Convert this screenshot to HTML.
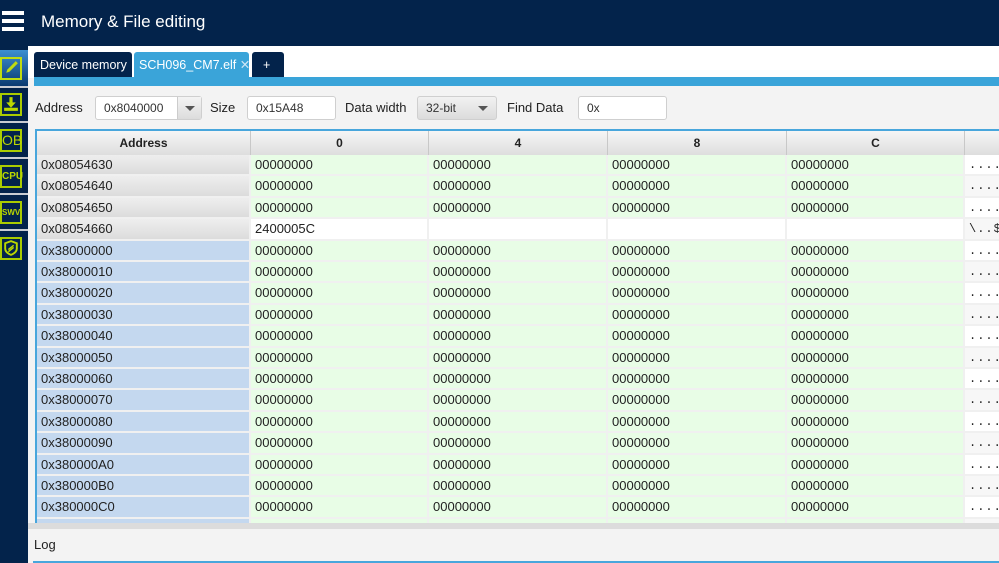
<!DOCTYPE html>
<html><head><meta charset="utf-8"><style>
*{margin:0;padding:0;box-sizing:border-box}
html{overflow:hidden;width:999px;height:563px}
body{width:999px;height:563px;overflow:hidden;background:#f3f3f3;font-family:"Liberation Sans",sans-serif;position:relative;color:#222}
.top{position:absolute;left:0;top:0;width:999px;height:46px;background:#03234b}
.title{position:absolute;left:41px;top:12px;color:#fff;font-size:17px}
.ham{position:absolute;left:2px;top:11px;width:22px;height:4px;background:#fff;box-shadow:0 8px 0 #fff,0 16px 0 #fff}
.side{position:absolute;left:0;top:46px;width:28px;height:517px;background:#03234b}
.sel{position:absolute;left:0;top:50px;width:28px;height:36px;background:linear-gradient(#3d8fd0,#0b3a70)}
.sep{position:absolute;left:0;width:28px;height:2px;background:#c9ccd2}
.ic{position:absolute;left:0;width:22px;height:23px;border:2px solid #aacc00;color:#bcd800;font-weight:bold;font-size:10px;text-align:center;line-height:19px}
.white{position:absolute;left:28px;top:46px;width:971px;height:32px;background:#fff}
.tab{position:absolute;top:52px;height:26px;color:#fff;font-size:12.5px;line-height:26px;padding-left:6px;border-radius:3px 3px 0 0;white-space:nowrap;overflow:hidden}
.strip{position:absolute;left:34px;top:77px;width:965px;height:9px;background:#3aa4d9}
.lbl{position:absolute;top:100px;font-size:13px;color:#222}
.inp{position:absolute;top:96px;height:24px;background:#fff;border:1px solid #cfcfcf;border-radius:3px;font-size:12px;line-height:22px;padding-left:8px;color:#333}
.tbl{position:absolute;left:35px;top:129px;width:964px;height:394px;border:2px solid #48a6dc;border-right:none;border-bottom:none;overflow:hidden;background:#f0f0f0}
.hd{position:absolute;top:0;height:24px;background:linear-gradient(#f6f6f6,#dedede);border-right:1px solid #c8c8c8;font-weight:bold;font-size:12px;text-align:center;line-height:24px}
.r{position:absolute;left:0;height:21.4px;width:964px}
.c{position:absolute;top:0;height:19.4px;font-size:13px;line-height:20px;padding-left:4px;white-space:nowrap}
.log{position:absolute;left:28px;top:523px;width:971px;height:40px;background:#f3f3f3;border-top:6px solid #dcdcdc;overflow:hidden}
</style></head><body>
<div class="top"><div class="ham"></div><div class="title">Memory &amp; File editing</div></div>
<div class="side"></div>
<div class="sel"></div>
<div class="sep" style="top:86px"></div><div class="sep" style="top:121px"></div><div class="sep" style="top:157px"></div><div class="sep" style="top:193px"></div><div class="sep" style="top:229px"></div>
<div class="ic" style="top:57px;border-color:#c0dc10"><svg width="18" height="18" viewBox="0 0 17 17"><path d="M4 13 L5 10 L13 2 L15 4 L7 12 Z" fill="#c0dc10"/></svg></div>
<div class="ic" style="top:93px"><svg width="18" height="18" viewBox="0 0 17 17"><path d="M7 2h3v5h3l-4.5 5L4 7h3z M2 12h13v3H2z" fill="#bcd800"/></svg></div>
<div class="ic" style="top:129px;font-size:14px;font-weight:normal">OB</div>
<div class="ic" style="top:165px">CPU</div>
<div class="ic" style="top:201px;font-size:8px">SWV</div>
<div class="ic" style="top:237px"><svg width="18" height="18" viewBox="0 0 17 17"><path d="M8.5 2 L14 4 V9 C14 12 11 14 8.5 15 C6 14 3 12 3 9 V4 Z" fill="none" stroke="#bcd800" stroke-width="1.8"/><path d="M6 10 L11 6 M6 12 L11 8" stroke="#bcd800" stroke-width="1.4"/></svg></div>
<div class="white"></div>
<div class="tab" style="left:34px;width:98px;background:#03234b">Device memory</div>
<div class="tab" style="left:134px;width:115px;background:#3aa4d9;padding-left:5px">SCH096_CM7.elf <span style="color:#cfe6f5">✕</span></div>
<div class="tab" style="left:252px;width:32px;background:#03234b;padding-left:11px">+</div>
<div class="strip"></div>
<div class="lbl" style="left:35px">Address</div>
<div class="inp" style="left:95px;width:107px">0x8040000<div style="position:absolute;right:0;top:0;width:24px;height:22px;background:linear-gradient(#f4f4f4,#dcdcdc);border-left:1px solid #ccc"><div style="position:absolute;left:7px;top:9px;border:5px solid transparent;border-top:5px solid #555;border-bottom:none"></div></div></div>
<div class="lbl" style="left:210px">Size</div>
<div class="inp" style="left:247px;width:89px">0x15A48</div>
<div class="lbl" style="left:345px">Data width</div>
<div class="inp" style="left:417px;width:80px;background:linear-gradient(#f2f2f2,#dcdcdc)">32-bit<div style="position:absolute;left:60px;top:9px;border:5px solid transparent;border-top:5px solid #555;border-bottom:none"></div></div>
<div class="lbl" style="left:507px">Find Data</div>
<div class="inp" style="left:578px;width:89px">0x</div>
<div class="tbl">
<div class="hd" style="left:0;width:214px">Address</div>
<div class="hd" style="left:214px;width:178px">0</div>
<div class="hd" style="left:392px;width:179px">4</div>
<div class="hd" style="left:571px;width:179px">8</div>
<div class="hd" style="left:750px;width:178px">C</div>
<div class="hd" style="left:928px;width:40px"></div>
<div id="rows"></div>
</div>
<div class="log"><div style="position:absolute;left:6px;top:8px;font-size:13px">Log</div><div style="position:absolute;left:5px;top:32px;width:970px;height:10px;border:2px solid #48a6dc;background:#fff"></div></div>
<script>
var a=["0x08054630","0x08054640","0x08054650","0x08054660","0x38000000","0x38000010","0x38000020","0x38000030","0x38000040","0x38000050","0x38000060","0x38000070","0x38000080","0x38000090","0x380000A0","0x380000B0","0x380000C0","0x380000D0"];
var h="";
for(var i=0;i<a.length;i++){
 var t=24+i*21.4;
 var ab=i<4?"linear-gradient(#eeeeee,#dcdcdc)":"#c4d8ef";
 var sp=i==3;
 var g=sp?"#fff":"#e8fde6";
 var d=sp?["2400005C","","",""]:["00000000","00000000","00000000","00000000"];
 var asc=sp?"\\..$":"....";
 var ab2=i%2?"#f7f7f7":"#fff";
 h+='<div class="r" style="top:'+t+'px"><div class="c" style="left:0;width:212px;background:'+ab+'">'+a[i]+'</div>';
 var L=[214,392,571,750],W=[176,177,177,176];
 for(var j=0;j<4;j++)h+='<div class="c" style="left:'+L[j]+'px;width:'+W[j]+'px;background:'+g+'">'+d[j]+'</div>';
 h+='<div class="c" style="left:928px;width:40px;background:'+ab2+';font-family:Liberation Mono,monospace;font-size:12px;letter-spacing:1px">'+asc+'</div></div>';
}
document.getElementById("rows").innerHTML=h;
</script>
</body></html>
